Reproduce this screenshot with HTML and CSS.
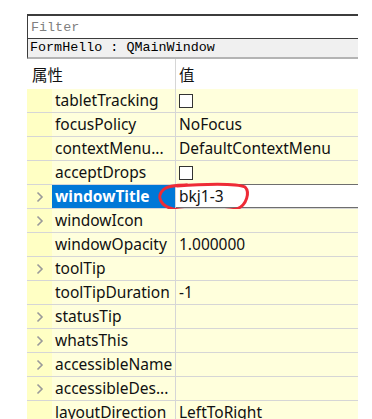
FILE: index.html
```html
<!DOCTYPE html>
<html lang="zh-CN">
<head>
  <meta charset="UTF-8" />
  <meta name="viewport" content="width=device-width, initial-scale=1" />
  <title>Property Editor</title>
  <link rel="stylesheet" href="styles.css">
</head>

<body>
  <div class="panel">
    <!-- Filter box -->
    <div class="filter">Filter</div>
    <div class="class-bar">FormHello : QMainWindow</div>

    <!-- Column header -->
    <div class="row head">
      <div class="name">属性</div>
      <div class="value">值</div>
    </div>

    <div class="row">
      <div class="branch"></div>
      <div class="name">tabletTracking</div>
      <div class="value"><span class="check"></span></div>
    </div>
    <div class="row">
      <div class="branch"></div>
      <div class="name">focusPolicy</div>
      <div class="value">NoFocus</div>
    </div>
    <div class="row">
      <div class="branch"></div>
      <div class="name">contextMenu...</div>
      <div class="value">DefaultContextMenu</div>
    </div>
    <div class="row">
      <div class="branch"></div>
      <div class="name">acceptDrops</div>
      <div class="value"><span class="check"></span></div>
    </div>
    <div class="row">
      <div class="branch"><svg class="chev" width="8" height="12" viewBox="0 0 8 12"><polyline points="1.5,1.5 6,6 1.5,10.5" /></svg></div>
      <div class="name selected">windowTitle</div>
      <div class="value edit">bkj1-3</div>
      <!-- red marker circle drawn over the editor -->
      <svg class="marker" width="100" height="32" viewBox="0 0 100 32">
        <path d="M20 3 C45 1, 80 0, 88 4 C93 9, 90 22, 80 26 C62 29, 32 29, 16 26 C4 23, -1 14, 6 7 C10 3, 18 2, 30 2" />
      </svg>
    </div>
    <div class="row">
      <div class="branch"><svg class="chev" width="8" height="12" viewBox="0 0 8 12"><polyline points="1.5,1.5 6,6 1.5,10.5" /></svg></div>
      <div class="name">windowIcon</div>
      <div class="value"></div>
    </div>
    <div class="row">
      <div class="branch"></div>
      <div class="name">windowOpacity</div>
      <div class="value">1.000000</div>
    </div>
    <div class="row">
      <div class="branch"><svg class="chev" width="8" height="12" viewBox="0 0 8 12"><polyline points="1.5,1.5 6,6 1.5,10.5" /></svg></div>
      <div class="name">toolTip</div>
      <div class="value"></div>
    </div>
    <div class="row">
      <div class="branch"></div>
      <div class="name">toolTipDuration</div>
      <div class="value">-1</div>
    </div>
    <div class="row">
      <div class="branch"><svg class="chev" width="8" height="12" viewBox="0 0 8 12"><polyline points="1.5,1.5 6,6 1.5,10.5" /></svg></div>
      <div class="name">statusTip</div>
      <div class="value"></div>
    </div>
    <div class="row">
      <div class="branch"><svg class="chev" width="8" height="12" viewBox="0 0 8 12"><polyline points="1.5,1.5 6,6 1.5,10.5" /></svg></div>
      <div class="name">whatsThis</div>
      <div class="value"></div>
    </div>
    <div class="row">
      <div class="branch"><svg class="chev" width="8" height="12" viewBox="0 0 8 12"><polyline points="1.5,1.5 6,6 1.5,10.5" /></svg></div>
      <div class="name">accessibleName</div>
      <div class="value"></div>
    </div>
    <div class="row">
      <div class="branch"><svg class="chev" width="8" height="12" viewBox="0 0 8 12"><polyline points="1.5,1.5 6,6 1.5,10.5" /></svg></div>
      <div class="name">accessibleDes...</div>
      <div class="value"></div>
    </div>
    <div class="row">
      <div class="branch"></div>
      <div class="name">layoutDirection</div>
      <div class="value">LeftToRight</div>
    </div>
  </div>
</body>
</html>
```

FILE: styles.css
```css
* {
  margin: 0;
  padding: 0;
  box-sizing: border-box;
}

body {
  background-color: #fff;
  color: #000;
  font-family: 'Noto Sans', 'Noto Sans CJK SC', sans-serif;
  overflow: hidden;
}

.panel {
  width: 331px;
  margin: 14px 0 0 27px;
}

/* Filter line edit */
.filter {
  height: 25px;
  border: 1px solid #3c3c3c;
  border-top-width: 2px;
  border-right: none;
  padding: 2px 0 0 3px;
  font-family: 'Liberation Mono', monospace;
  font-size: 13.4px;
  line-height: 20px;
  color: #808080;
}

.class-bar {
  height: 20px;
  background-color: #f0f0f0;
  border-left: 1px solid #3c3c3c;
  border-bottom: 2px solid #b4b4b4;
  padding: 0 0 0 2px;
  font-family: 'Liberation Mono', monospace;
  font-size: 13.4px;
  line-height: 18px;
  color: #000;
}

/* Property rows */
.row {
  display: grid;
  grid-template-columns: 25px 124px 1fr;
  height: 24px;
  border-bottom: 1px solid #d6d6d6;
  background-color: #ffffdc;
  font-size: 15.5px;
  line-height: 23px;
  color: #111;
  position: relative;
}

.row.head {
  grid-template-columns: 149px 1fr;
  height: 30px;
  border-bottom: none;
  background-color: #fff;
  line-height: 30px;
  font-family: 'Noto Sans CJK SC', sans-serif;
  font-size: 15.5px;
}

.row.head .name {
  padding-left: 5px;
}

.branch {
  background-color: #ffffc4;
  display: flex;
  align-items: center;
  padding-left: 9px;
}

.chev polyline {
  fill: none;
  stroke: #9a9a9a;
  stroke-width: 1.6;
}

.name {
  padding-left: 3px;
  border-right: 1px solid #d6d6d6;
  white-space: nowrap;
  overflow: hidden;
}

.name.selected {
  background-color: #0078d7;
  color: #fff;
  font-weight: bold;
}

.value {
  padding-left: 3px;
  display: flex;
  align-items: center;
  white-space: nowrap;
}

.value.edit {
  background-color: #fff;
  box-shadow: inset 0 1px #6e6e6e, inset 0 -1px #6e6e6e;
  height: 24px;
  margin-top: -1px;
}

.check {
  width: 14px;
  height: 14px;
  border: 1px solid #333;
  background-color: #fff;
}

.marker {
  position: absolute;
  left: 130px;
  top: -2px;
  overflow: visible;
  pointer-events: none;
}

.marker path {
  fill: none;
  stroke: #ee2b36;
  stroke-width: 3;
  stroke-linecap: round;
}
```
